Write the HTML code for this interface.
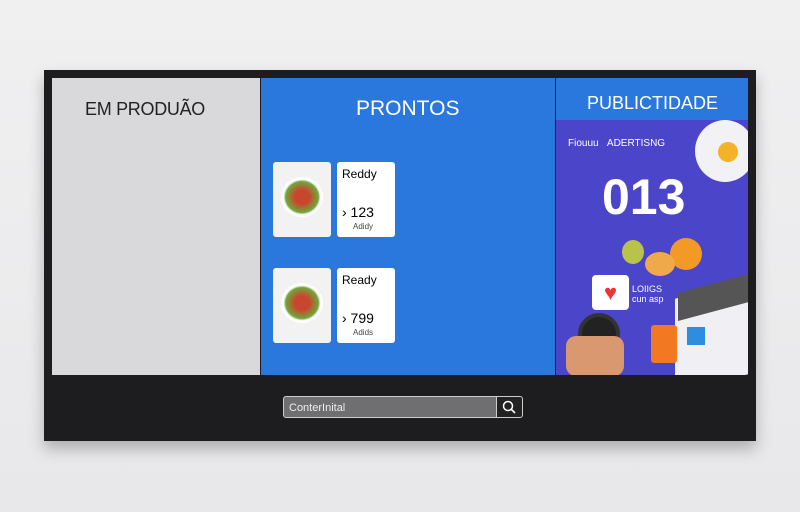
<!DOCTYPE html><html><head><style>
body{margin:0;width:800px;height:512px;background:linear-gradient(#f0f0f1,#e8e8ea);position:relative;overflow:hidden;font-family:"Liberation Sans",sans-serif}
.a{position:absolute}
.card{position:absolute;background:#fff;border-radius:3px}
</style></head><body>
<div class="a" style="left:44px;top:70px;width:712px;height:371px;background:#1d1d1f;box-shadow:0 8px 14px rgba(0,0,0,.25)"></div>
<div class="a" style="left:52px;top:78px;width:208px;height:297px;background:#d9d9db"></div>
<div class="a" style="left:85px;top:99px;font-size:18px;color:#222;letter-spacing:-0.3px">EM PRODUÃO</div>
<div class="a" style="left:261px;top:78px;width:294px;height:297px;background:#2a78de"></div>
<div class="a" style="left:356px;top:97px;font-size:21px;color:#fff">PRONTOS</div>
<div class="card" style="left:273px;top:162px;width:58px;height:75px;background:#f2f2f3"></div>
<div class="a" style="left:281px;top:177px;width:42px;height:40px;border-radius:50%;background:radial-gradient(#c9462e 25%,#6fa83a 55%,#fff 62%)"></div>
<div class="card" style="left:337px;top:162px;width:58px;height:75px"></div>
<div class="a" style="left:342px;top:167px;font-size:12px">Reddy</div>
<div class="a" style="left:342px;top:204px;font-size:14px">› 123</div>
<div class="a" style="left:353px;top:222px;font-size:8px;color:#444">Adidy</div>
<div class="card" style="left:273px;top:268px;width:58px;height:75px;background:#f2f2f3"></div>
<div class="a" style="left:281px;top:283px;width:42px;height:40px;border-radius:50%;background:radial-gradient(#c9462e 25%,#6fa83a 55%,#fff 62%)"></div>
<div class="card" style="left:337px;top:268px;width:58px;height:75px"></div>
<div class="a" style="left:342px;top:273px;font-size:12px">Ready</div>
<div class="a" style="left:342px;top:310px;font-size:14px">› 799</div>
<div class="a" style="left:353px;top:328px;font-size:8px;color:#444">Adids</div>
<div class="a" style="left:556px;top:78px;width:192px;height:297px;background:#4a45c9;overflow:hidden">
<div class="a" style="left:0;top:0;width:192px;height:42px;background:#2a78de"></div>
<div class="a" style="left:31px;top:15px;font-size:18px;color:#fff">PUBLICTIDADE</div>
<div class="a" style="left:139px;top:42px;width:60px;height:62px;border-radius:50%;background:#f2f2f5"></div>
<div class="a" style="left:162px;top:64px;width:20px;height:20px;border-radius:50%;background:#f4b12a"></div>
<div class="a" style="left:12px;top:60px;font-size:10px;color:#fff">Fiouuu&nbsp;&nbsp;&nbsp;ADERTISNG</div>
<div class="a" style="left:46px;top:90px;font-size:50px;font-weight:bold;color:#fff">013</div>
<div class="a" style="left:114px;top:160px;width:32px;height:32px;border-radius:50%;background:#f29a25"></div>
<div class="a" style="left:89px;top:174px;width:30px;height:24px;border-radius:50%;background:#f0a94a"></div>
<div class="a" style="left:66px;top:162px;width:22px;height:24px;border-radius:50%;background:#b9c24a"></div>
<div class="a" style="left:36px;top:197px;width:37px;height:35px;border-radius:4px;background:#fff;color:#e33;font-size:22px;text-align:center;line-height:35px">♥</div>
<div class="a" style="left:76px;top:206px;font-size:9px;color:#fff">LOIIGS<br>cun asp</div>
<div class="a" style="left:22px;top:235px;width:34px;height:34px;border-radius:50%;background:#222;border:4px solid #333"></div>
<div class="a" style="left:10px;top:258px;width:58px;height:40px;background:#d99870;border-radius:10px"></div>
<div class="a" style="left:119px;top:210px;width:80px;height:95px;background:#f0f0f4;transform:skewY(-15deg)"></div>
<div class="a" style="left:122px;top:205px;width:75px;height:28px;background:#555;transform:skewY(-15deg)"></div>
<div class="a" style="left:131px;top:249px;width:18px;height:18px;background:#2d8ee0"></div>
<div class="a" style="left:95px;top:247px;width:26px;height:38px;background:#f27822;border-radius:3px"></div>
</div>
<div class="a" style="left:283px;top:396px;height:22px;border:1px solid #ccc;border-radius:3px 0 0 3px;background:#6f6f71;color:#eee;font-size:11px;line-height:22px;padding-left:5px;box-sizing:border-box;width:214px">ConterInital</div>
<div class="a" style="left:496px;top:396px;width:27px;height:22px;border:1px solid #ccc;border-radius:0 3px 3px 0;box-sizing:border-box;background:#222"><svg width="25" height="20"><circle cx="11" cy="9" r="4.5" stroke="#fff" stroke-width="1.5" fill="none"/><path d="M14 12l4 4" stroke="#fff" stroke-width="1.6"/></svg></div>
</body></html>
